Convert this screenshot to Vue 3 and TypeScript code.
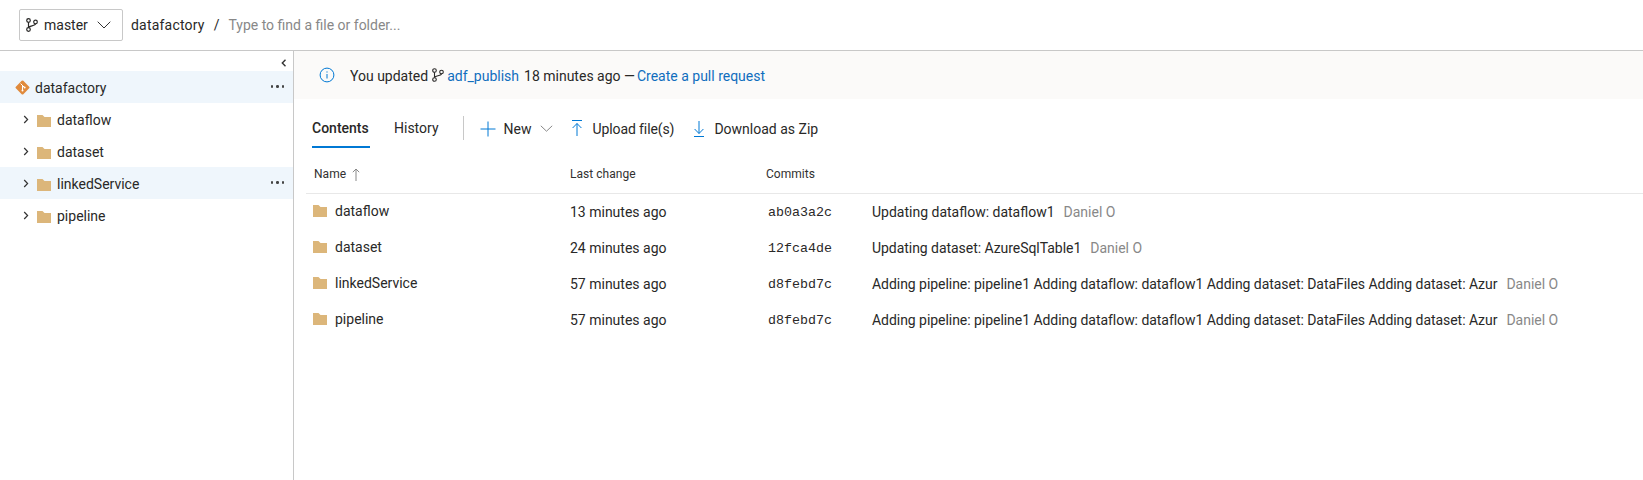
<script setup lang="ts">
const tree = [
  { name: 'dataflow', active: false },
  { name: 'dataset', active: false },
  { name: 'linkedService', active: true },
  { name: 'pipeline', active: false },
]
const rows = [
  { name: 'dataflow', time: '13 minutes ago', sha: 'ab0a3a2c', msg: 'Updating dataflow: dataflow1', tight: false },
  { name: 'dataset', time: '24 minutes ago', sha: '12fca4de', msg: 'Updating dataset: AzureSqlTable1', tight: true },
  { name: 'linkedService', time: '57 minutes ago', sha: 'd8febd7c', msg: 'Adding pipeline: pipeline1 Adding dataflow: dataflow1 Adding dataset: DataFiles Adding dataset: Azur', tight: true },
  { name: 'pipeline', time: '57 minutes ago', sha: 'd8febd7c', msg: 'Adding pipeline: pipeline1 Adding dataflow: dataflow1 Adding dataset: DataFiles Adding dataset: Azur', tight: true },
]
</script>

<template>
  <div class="page">
    <header class="top">
      <button class="branch">
        <svg class="branch-ic" width="12" height="14" viewBox="0 0 12 14" fill="none" stroke="#292827" stroke-width="1.2">
          <circle cx="2.5" cy="2.5" r="1.8" />
          <circle cx="2.5" cy="11.5" r="1.8" />
          <circle cx="9.5" cy="4" r="1.8" />
          <path d="M2.5 4.3v5.4M9.5 5.8c0 2.5-7 1.5-7 4" />
        </svg>
        <span>master</span>
        <svg class="branch-chev" width="14" height="8" viewBox="0 0 14 8" fill="none" stroke="#333" stroke-width="1"><path d="M.7 .7L7 7l6.3-6.3" /></svg>
      </button>
      <span class="crumb">datafactory</span>
      <span class="slash">/</span>
      <span class="search">Type to find a file or folder...</span>
    </header>
    <div class="body">
      <aside class="side">
        <div class="collapse">
          <svg width="6" height="8" viewBox="0 0 6 8" fill="none" stroke="#333" stroke-width="1.4"><path d="M4.5 .8L1.3 4l3.2 3.2" /></svg>
        </div>
        <div class="node root active">
          <svg class="repo" width="15" height="15" viewBox="0 0 15 15">
            <rect x="2.2" y="2.2" width="10.6" height="10.6" rx="1.2" transform="rotate(45 7.5 7.5)" fill="#e08a3c" />
            <path d="M5.6 3.6l4 4M7.5 5.5v5" stroke="#fff" stroke-width="1" fill="none" />
            <circle cx="7.5" cy="10.5" r="1" fill="#fff" />
            <circle cx="9.6" cy="7.6" r="1" fill="#fff" />
          </svg>
          <span class="root-name">datafactory</span>
          <span class="dots"><i></i><i></i><i></i></span>
        </div>
        <div v-for="n in tree" :key="n.name" class="node" :class="{ active: n.active }">
          <svg class="caret" width="6" height="9" viewBox="0 0 6 9" fill="none" stroke="#333" stroke-width="1.2"><path d="M1.2 1L4.6 4.5 1.2 8" /></svg>
          <svg class="folder" width="14" height="12" viewBox="0 0 14 12"><path d="M0 0h5.5l2 2H14v10H0z" fill="#dcb67a" /></svg>
          <span class="node-name">{{ n.name }}</span>
          <span v-if="n.active" class="dots"><i></i><i></i><i></i></span>
        </div>
      </aside>
      <main class="main">
        <div class="banner">
          <svg class="info" width="16" height="16" viewBox="0 0 16 16" fill="none" stroke="#0078d4"><circle cx="8" cy="8" r="6.9" /><path d="M8 7v4.5M8 4.4v1.2" /></svg>
          <span>You updated</span>
          <svg class="pub-ic" width="12" height="14" viewBox="0 0 12 14" fill="none" stroke="#292827" stroke-width="1.1">
            <circle cx="2.5" cy="2.5" r="1.8" />
            <circle cx="2.5" cy="11.5" r="1.8" />
            <circle cx="9.5" cy="4" r="1.8" />
            <path d="M2.5 4.3v5.4M9.5 5.8c0 2.5-7 1.5-7 4" />
          </svg>
          <a class="link">adf_publish</a>
          <span class="after">18 minutes ago —</span>
          <a class="link pr">Create a pull request</a>
        </div>
        <div class="toolbar">
          <span class="tab on">Contents</span>
          <span class="tab">History</span>
          <span class="sep"></span>
          <span class="cmd new">
            <svg width="16" height="16" viewBox="0 0 16 16" stroke="#0078d4"><path d="M8 .5v15M.5 8h15" /></svg>
            <span>New</span>
            <svg class="new-chev" width="13" height="7" viewBox="0 0 13 7" fill="none" stroke="#888"><path d="M.8 .8L6.5 6.2 12.2 .8" /></svg>
          </span>
          <span class="cmd up">
            <svg width="12" height="17" viewBox="0 0 12 17" fill="none" stroke="#0078d4"><path d="M1 .5h10M6 16V3.5M1.6 8L6 3.5 10.4 8" /></svg>
            <span class="up-text">Upload file(s)</span>
          </span>
          <span class="cmd down">
            <svg width="12" height="17" viewBox="0 0 12 17" fill="none" stroke="#0078d4"><path d="M1 16.5h10M6 1v12.5M1.6 9L6 13.5 10.4 9" /></svg>
            <span>Download as Zip</span>
          </span>
        </div>
        <div class="head">
          <span class="h-name">Name
            <svg width="8" height="13" viewBox="0 0 8 13" fill="none" stroke="#888"><path d="M4 13V1M.8 4.2L4 1l3.2 3.2" /></svg>
          </span>
          <span>Last change</span>
          <span>Commits</span>
        </div>
        <div v-for="r in rows" :key="r.name" class="row">
          <span class="r-name">
            <svg class="r-folder" width="14" height="12" viewBox="0 0 14 12"><path d="M0 0h5.5l2 2H14v10H0z" fill="#dcb67a" /></svg>
            <span class="r-label">{{ r.name }}</span>
          </span>
          <span>{{ r.time }}</span>
          <span class="sha">{{ r.sha }}</span>
          <span class="msg" :class="{ tight: r.tight }">{{ r.msg }}</span>
          <span class="author">Daniel O</span>
        </div>
      </main>
    </div>
  </div>
</template>

<style>
html, body { margin: 0; background: #fff; }
</style>

<style scoped>
.page {
  width: 1643px;
  height: 480px;
  overflow: hidden;
  display: flex;
  flex-direction: column;
  font-family: Roboto, "Liberation Sans", sans-serif;
  font-size: 14px;
  color: #292827;
  background: #fff;
}
.top {
  flex: none;
  display: flex;
  align-items: center;
  height: 50px;
  padding-left: 19px;
  border-bottom: 1px solid #c8c8c8;
}
.branch {
  width: 104px;
  height: 32px;
  box-sizing: border-box;
  display: flex;
  align-items: center;
  padding: 0 0 0 6px;
  border: 1px solid #c8c8c8;
  border-radius: 2px;
  background: #fff;
  font: inherit;
  color: #292827;
}
.branch-ic { margin-right: 6px; }
.branch-chev { margin-left: 9px; }
.crumb { margin-left: 8px; letter-spacing: .2px; }
.slash { margin-left: 9px; }
.search { margin-left: 9px; color: #888; }
.body { flex: 1; display: flex; min-height: 0; }
.side {
  width: 294px;
  box-sizing: border-box;
  border-right: 1px solid #c8c8c8;
  flex: none;
}
.collapse {
  height: 20px;
  display: flex;
  align-items: center;
  justify-content: flex-end;
  padding: 4px 6px 0 0;
  box-sizing: border-box;
}
.node {
  height: 32px;
  display: flex;
  align-items: center;
  padding-left: 23px;
}
.node.active { background: #eff6fc; }
.root { padding-left: 15px; }
.repo { margin-right: 5px; }
.caret { margin-right: 8px; margin-top: 1px; }
.folder { margin-right: 6px; margin-top: 3px; }
.node-name, .root-name { padding-top: 2px; }
.dots {
  margin-left: auto;
  margin-right: 9px;
  margin-top: -1px;
  display: flex;
  gap: 3px;
}
.dots i {
  width: 2.5px;
  height: 2.5px;
  border-radius: 50%;
  background: #444;
}
.main { flex: 1; min-width: 0; }
.banner {
  height: 48px;
  display: flex;
  align-items: center;
  padding-left: 25px;
  background: #fbfaf9;
}
.banner > span, .banner > a { padding-top: 2px; }
.info { margin-right: 15px; }
.pub-ic { margin: 0 3px 0 4px; }
.link { color: #106ebe; }
.after { margin: 0 2px 0 5px; }
.toolbar {
  height: 49px;
  display: flex;
  align-items: center;
  padding-left: 18px;
}
.tab {
  height: 49px;
  line-height: 59px;
  box-sizing: border-box;
  margin-right: 24px;
}
.tab.on {
  font-weight: 500;
  width: 58px;
  border-bottom: 2px solid #0078d4;
}
.sep {
  width: 1px;
  height: 24px;
  margin-top: 9px;
  background: #c8c8c8;
}
.cmd {
  display: flex;
  align-items: center;
  margin-top: 10px;
}
.new { margin-left: 16px; gap: 8px; }
.new-chev { margin-left: 1px; }
.up { margin-left: 18px; gap: 9px; }
.up-text { letter-spacing: -.1px; }
.down { margin-left: 19px; gap: 9px; }
.head, .row {
  display: grid;
  grid-template-columns: 257px 196px 106px max-content max-content;
  align-items: center;
  margin-left: 12px;
  padding-left: 7px;
}
.head {
  height: 46px;
  box-sizing: border-box;
  padding-top: 7px;
  font-size: 12px;
  letter-spacing: .03px;
  color: #323130;
  border-bottom: 1px solid #e8e8e8;
}
.h-name { display: flex; align-items: center; gap: 6px; margin-left: 1px; }
.row { height: 36px; }
.r-name { display: flex; align-items: center; gap: 8px; }
.r-folder { margin-top: -2px; }
.r-label { margin-top: -3px; }
.sha { font-family: "Liberation Mono", monospace; font-size: 13.33px; margin-left: 2px; }
.msg { white-space: nowrap; }
.msg.tight { letter-spacing: -.045px; }
.author { margin-left: 9px; color: #888; }
</style>
